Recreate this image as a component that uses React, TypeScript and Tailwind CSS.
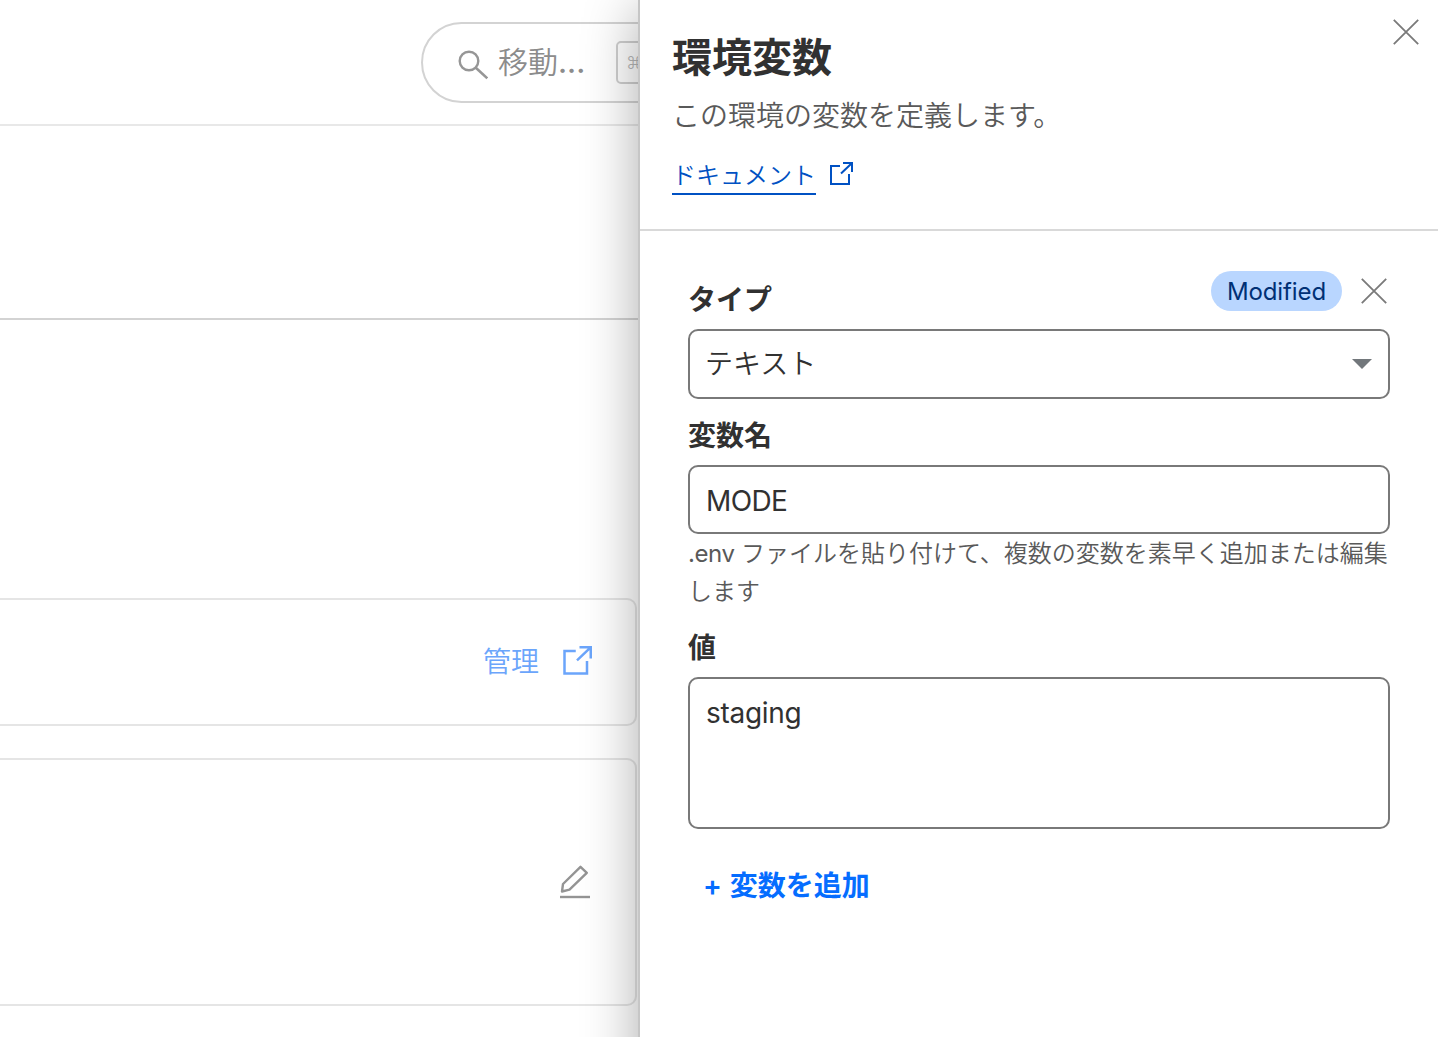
import type { ReactNode } from 'react';

interface IconProps {
  className?: string;
}

// ─── Icons ───
function SearchIcon({ className }: IconProps) {
  return (
    <svg viewBox="0 0 30 30" fill="none" stroke="currentColor" className={className}>
      <circle cx="11" cy="11" r="9.3" strokeWidth="2.4" />
      <path d="M17.8 17.8 29.3 28.3" strokeWidth="2.6" />
    </svg>
  );
}

function ExternalIcon({ className }: IconProps) {
  return (
    <svg viewBox="0 0 24 24" fill="none" stroke="currentColor" strokeWidth="2" className={className}>
      <path d="M11 4H2v18h18V12" />
      <path d="M14 1h9v9M22.5 1.5 12 11.5" />
    </svg>
  );
}

function CloseIcon({ className }: IconProps) {
  return (
    <svg viewBox="0 0 26 26" fill="none" stroke="currentColor" strokeWidth="1.8" className={className}>
      <path d="M.8.8 25.2 25.2M25.2.8.8 25.2" />
    </svg>
  );
}

function EditIcon({ className }: IconProps) {
  return (
    <svg viewBox="0 0 30 34" fill="none" stroke="currentColor" strokeWidth="2.4" strokeLinejoin="round" className={className}>
      <path d="M2 26.5 3 19 20.5 1.8 26.8 7.8 9.5 24.7Z" />
      <path d="M0 32h30" />
    </svg>
  );
}

function Label({ children }: { children: ReactNode }) {
  return <div className="text-[28px] font-semibold leading-[42px] text-[#313131]">{children}</div>;
}

// ─── Dimmed page behind the drawer ───
function Background() {
  return (
    <div className="w-[638px] shrink-0 overflow-hidden">
      <header className="flex h-[126px] items-start justify-end border-b-2 border-[#e8e8e8] pt-[22px]">
        <div className="-mr-[60px] flex h-[81px] w-[277px] shrink-0 items-center rounded-full border-2 border-[#d3d3d3] pl-[35px] text-[#8c8c8c]">
          <SearchIcon className="mt-[5px] size-[30px] text-[#969696]" />
          <span className="-mt-[2px] ml-[10px] w-[118px] text-[30px] font-[350] leading-[40px]">
            移動<span className="font-medium">...</span>
          </span>
          <kbd className="flex h-[43px] w-[60px] items-center rounded-[5px] border-2 border-[#cfcfcf] pl-2 font-['Inter','Noto_Sans_CJK_JP',sans-serif] text-[18px] font-light text-[#b8b8b8]">
            ⌘
          </kbd>
        </div>
      </header>
      <div className="h-[194px] border-b-2 border-[#d3d3d3]" />
      <div className="mt-[278px] flex w-[637px] flex-col gap-8">
        <div className="flex h-32 items-center justify-end gap-[22px] rounded-r-[10px] border-2 border-l-0 border-[#e5e5e5] pr-[43px] text-[#6ba5fb]">
          <span className="mr-px text-[28px] font-[350] leading-[42px]">管理</span>
          <ExternalIcon className="-mt-[3px] size-[30px]" />
        </div>
        <div className="flex h-[248px] items-center justify-end rounded-r-[10px] border-2 border-l-0 border-[#e5e5e5] pr-[45px]">
          <EditIcon className="h-[34px] w-[30px] text-[#949494]" />
        </div>
      </div>
    </div>
  );
}

function DrawerHeader() {
  return (
    <header className="flex h-[231px] items-start justify-between border-b-2 border-[#d9d9d9] pl-8 pr-[19px]">
      <div>
        <h1 className="mt-7 text-[40px] font-semibold leading-[60px] text-[#313131]">環境変数</h1>
        <p className="mt-[7px] text-[28px] font-[350] leading-[42px] text-[#595959]">この環境の変数を定義します。</p>
        <a href="#" className="mt-[21px] flex items-start gap-[13px] text-[#0051c3]">
          <span className="border-b-2 border-[#0051c3] text-[24px] font-[350] leading-[35px]">ドキュメント</span>
          <ExternalIcon className="mt-1 size-6" />
        </a>
      </div>
      <button className="mt-[19px] text-[#7a7a7a]">
        <CloseIcon className="size-[26px]" />
      </button>
    </header>
  );
}

function VariableForm() {
  return (
    <div className="flex flex-col px-12 pt-10">
      <div className="flex h-[58px] items-start justify-between">
        <div className="mt-2">
          <Label>タイプ</Label>
        </div>
        <div className="flex items-center gap-[19px] pr-[3px]">
          <span className="flex h-10 w-[131px] items-center justify-center rounded-full bg-[#b9d6ff] pt-[2px] text-[24px] tracking-[-0.1px] text-[#003075]">
            Modified
          </span>
          <button className="text-[#7a7a7a]">
            <CloseIcon className="size-[26px]" />
          </button>
        </div>
      </div>
      <div className="flex h-[70px] items-center justify-between rounded-[10px] border-2 border-[#797979] pl-[15px] pr-4 text-[28px] font-[350] text-[#313131]">
        テキスト
        <svg viewBox="0 0 20 10" className="h-[10px] w-5 fill-[#72777b]">
          <path d="M0 0h20L10 10Z" />
        </svg>
      </div>

      <div className="mb-2 mt-4">
        <Label>変数名</Label>
      </div>
      <div className="flex h-[69px] items-center rounded-[10px] border-2 border-[#797979] px-4 pt-[2px] text-[28px] tracking-[-0.6px] text-[#313131]">
        MODE
      </div>
      <p className="-mr-2 mt-px text-[24px] font-[350] leading-[38px] text-[#595959]">
        <span className="font-normal tracking-[-0.4px]">.env </span>
        ファイルを貼り付けて、複数の変数を素早く追加または編集
        <br />
        します
      </p>

      <div className="mb-2 mt-4">
        <Label>値</Label>
      </div>
      <div className="h-[152px] rounded-[10px] border-2 border-[#797979] px-4 pt-[13px] text-[28px] leading-[42px] tracking-[-0.3px] text-[#313131]">
        staging
      </div>

      <button className="mt-9 flex items-center gap-2 pl-[15px] text-[28px] font-semibold leading-[42px] text-[#056dff]">
        <span>+</span>
        <span>変数を追加</span>
      </button>
    </div>
  );
}

export default function App() {
  return (
    <div className="flex h-[1037px] w-[1438px] overflow-hidden bg-white font-['Inter','Noto_Sans_CJK_JP',sans-serif]">
      <Background />
      <aside className="z-10 h-[1120px] w-[800px] shrink-0 border-l-2 border-[#c6c6c6] bg-white shadow-[0_8px_52px_rgba(0,0,0,0.33)]">
        <DrawerHeader />
        <VariableForm />
      </aside>
    </div>
  );
}
